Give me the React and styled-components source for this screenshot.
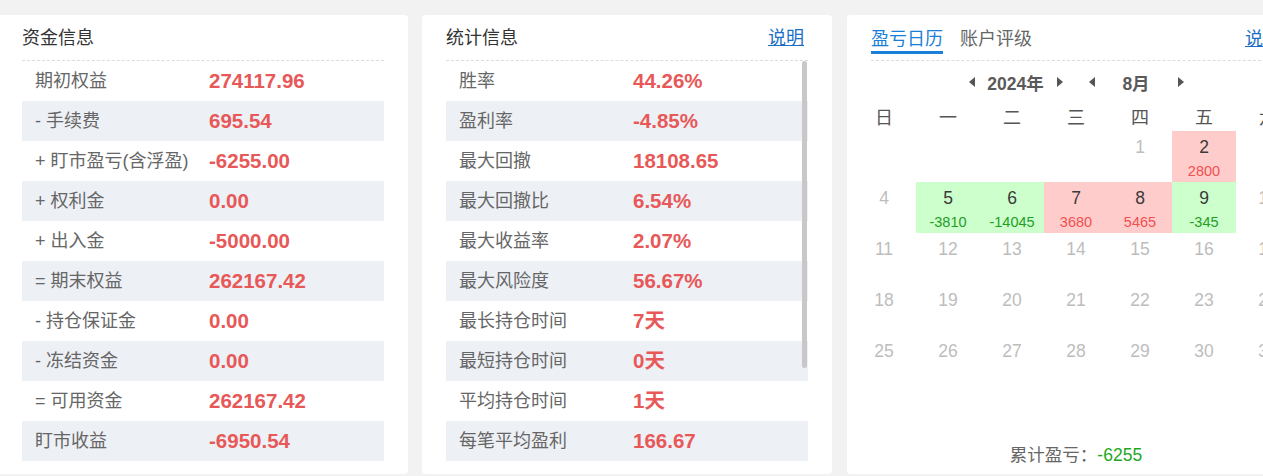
import React from 'react';
import styled, { createGlobalStyle } from 'styled-components';

const color = {
  page: '#f2f2f2',
  title: '#333',
  label: '#666',
  value: '#e85858',
  stripe: '#edf0f5',
  link: '#1a6fc4',
  tab: '#1a7fd9',
  dash: '#dcdcdc',
  muted: '#bdbdbd',
  profitBg: '#ffcccc',
  lossBg: '#ccffcc',
  profit: '#f05050',
  loss: '#1f9e1f',
};

const fontStack = `"Liberation Sans", "Noto Sans CJK SC", sans-serif`;

const GlobalStyle = createGlobalStyle`
  html, body {
    margin: 0;
    background: ${color.page};
  }
  body {
    font-family: ${fontStack};
  }
`;

const Page = styled.div`
  overflow: hidden;
  padding-top: 15px;
  height: 461px;
`;

const PanelRow = styled.div`
  display: flex;
  gap: 14px;
  margin-left: -2px;
`;

const Panel = styled.section`
  flex: none;
  width: ${(p) => p.$width}px;
  margin-left: ${(p) => p.$shift || 0}px;
  height: 459px;
  box-sizing: border-box;
  background: #fff;
  border-radius: 4px;
  padding: 0 24px ${(p) => p.$bottom ?? 13}px;
  display: flex;
  flex-direction: column;
`;

const Header = styled.header`
  display: flex;
  align-items: center;
  justify-content: space-between;
  height: 45px;
  border-bottom: 1px dashed ${color.dash};
  font-size: 18px;
  line-height: 24px;
`;

const Title = styled.div`
  color: ${color.title};
`;

const Link = styled.a`
  color: ${color.link};
  text-decoration: underline;
  cursor: pointer;
  margin-right: ${(p) => p.$inset || 0}px;
  padding-bottom: ${(p) => p.$lift || 0}px;
`;

const Rows = styled.div`
  position: relative;
  height: 400px;
`;

// stands in for the overlay scrollbar of the statistics list
const ScrollThumb = styled.div`
  position: absolute;
  top: 0;
  right: 1px;
  width: 5px;
  height: 307px;
  border-radius: 3px;
  background: #c8c8c8;
`;

const Row = styled.div`
  display: grid;
  grid-template-columns: 187px 1fr;
  align-items: center;
  height: 40px;

  &:nth-child(even) {
    background: ${color.stripe};
  }
`;

const Label = styled.span`
  padding-left: 13px;
  font-size: 18px;
  line-height: 24px;
  color: ${color.label};
  white-space: nowrap;
`;

const Value = styled.span`
  font-size: 20.5px;
  line-height: 24px;
  font-weight: bold;
  color: ${color.value};
`;

const CalHeader = styled(Header)`
  align-items: flex-end;
  height: 39px;
  padding-bottom: 6px;
`;

const Tabs = styled.div`
  display: flex;
  gap: 17px;
`;

const Tab = styled.span`
  line-height: 24px;
  color: ${(p) => (p.$active ? color.tab : color.label)};
  border-bottom: 3px solid ${(p) => (p.$active ? color.tab : 'transparent')};
  cursor: pointer;
`;

const Calendar = styled.div`
  width: 448px;
  align-self: center;
`;

const Nav = styled.div`
  display: flex;
  align-items: center;
  justify-content: center;
  height: 30px;
  margin-top: 6px;
`;

const NavLabel = styled.span`
  width: ${(p) => p.$width}px;
  text-align: center;
  font-size: 17.5px;
  font-weight: bold;
  color: #5a5a5a;
`;

const NavGap = styled.span`
  width: 26px;
`;

const Arrow = styled.svg`
  display: block;
  width: 6px;
  height: 10px;
  fill: #555;
  cursor: pointer;
`;

const Grid = styled.div`
  display: grid;
  grid-template-columns: repeat(7, 64px);
  grid-template-rows: 34px;
  grid-auto-rows: 51px;
`;

const WeekDay = styled.div`
  box-sizing: border-box;
  padding-top: 8px;
  line-height: 26px;
  text-align: center;
  font-size: 18px;
  color: #555;
`;

const Cell = styled.div`
  display: flex;
  flex-direction: column;
  align-items: center;
  background: ${(p) => (p.$pnl == null ? 'transparent' : p.$pnl > 0 ? color.profitBg : color.lossBg)};
`;

const DayNum = styled.span`
  margin-top: 6px;
  font-size: 17.5px;
  line-height: 20px;
  color: ${(p) => (p.$active ? '#3a3a3a' : color.muted)};
`;

const DayPnl = styled.span`
  margin-top: 5px;
  font-size: 14.5px;
  line-height: 18px;
  color: ${(p) => (p.$pnl > 0 ? color.profit : color.loss)};
`;

const Total = styled.div`
  margin-top: auto;
  text-align: center;
  font-size: 17.5px;
  line-height: 24px;
  color: ${color.label};
`;

const TotalValue = styled.span`
  color: #1fa81f;
`;

const fundRows = [
  ['期初权益', '274117.96'],
  ['-  手续费', '695.54'],
  ['+ 盯市盈亏(含浮盈)', '-6255.00'],
  ['+ 权利金', '0.00'],
  ['+ 出入金', '-5000.00'],
  ['= 期末权益', '262167.42'],
  ['-  持仓保证金', '0.00'],
  ['-  冻结资金', '0.00'],
  ['= 可用资金', '262167.42'],
  ['盯市收益', '-6950.54'],
];

const statRows = [
  ['胜率', '44.26%'],
  ['盈利率', '-4.85%'],
  ['最大回撤', '18108.65'],
  ['最大回撤比', '6.54%'],
  ['最大收益率', '2.07%'],
  ['最大风险度', '56.67%'],
  ['最长持仓时间', '7天'],
  ['最短持仓时间', '0天'],
  ['平均持仓时间', '1天'],
  ['每笔平均盈利', '166.67'],
];

const weekDays = ['日', '一', '二', '三', '四', '五', '六'];

// August 2024 starts on a Thursday
const firstWeekday = 4;
const daysInMonth = 31;
const pnlByDay = { 2: 2800, 5: -3810, 6: -14045, 7: 3680, 8: 5465, 9: -345 };

const LeftArrow = () => (
  <Arrow viewBox="0 0 6 10">
    <polygon points="6,0 6,10 0,5" />
  </Arrow>
);

const RightArrow = () => (
  <Arrow viewBox="0 0 6 10">
    <polygon points="0,0 6,5 0,10" />
  </Arrow>
);

function InfoTable({ rows, scroll }) {
  return (
    <Rows>
      {rows.map(([label, value]) => (
        <Row key={label}>
          <Label>{label}</Label>
          <Value>{value}</Value>
        </Row>
      ))}
      {scroll && <ScrollThumb />}
    </Rows>
  );
}

function PnlCalendar() {
  const cells = [];
  for (let i = 0; i < firstWeekday; i += 1) cells.push(<Cell key={`b${i}`} />);
  for (let d = 1; d <= daysInMonth; d += 1) {
    const pnl = pnlByDay[d];
    cells.push(
      <Cell key={d} $pnl={pnl}>
        <DayNum $active={pnl != null}>{d}</DayNum>
        {pnl != null && <DayPnl $pnl={pnl}>{pnl}</DayPnl>}
      </Cell>
    );
  }
  const total = Object.values(pnlByDay).reduce((a, b) => a + b, 0);

  return (
    <>
      <Calendar>
        <Nav>
          <LeftArrow />
          <NavLabel $width={82}>2024年</NavLabel>
          <RightArrow />
          <NavGap />
          <LeftArrow />
          <NavLabel $width={83}>8月</NavLabel>
          <RightArrow />
        </Nav>
        <Grid>
          {weekDays.map((w) => (
            <WeekDay key={w}>{w}</WeekDay>
          ))}
          {cells}
        </Grid>
      </Calendar>
      <Total>
        累计盈亏：<TotalValue>{total}</TotalValue>
      </Total>
    </>
  );
}

export default function App() {
  return (
    <Page>
      <GlobalStyle />
      <PanelRow>
        <Panel $width={410}>
          <Header>
            <Title>资金信息</Title>
          </Header>
          <InfoTable rows={fundRows} />
        </Panel>
        <Panel $width={410}>
          <Header>
            <Title>统计信息</Title>
            <Link $inset={4}>说明</Link>
          </Header>
          <InfoTable rows={statRows} scroll />
        </Panel>
        <Panel $width={458} $shift={1} $bottom={7}>
          <CalHeader>
            <Tabs>
              <Tab $active>盈亏日历</Tab>
              <Tab>账户评级</Tab>
            </Tabs>
            <Link $lift={3}>说明</Link>
          </CalHeader>
          <PnlCalendar />
        </Panel>
      </PanelRow>
    </Page>
  );
}
